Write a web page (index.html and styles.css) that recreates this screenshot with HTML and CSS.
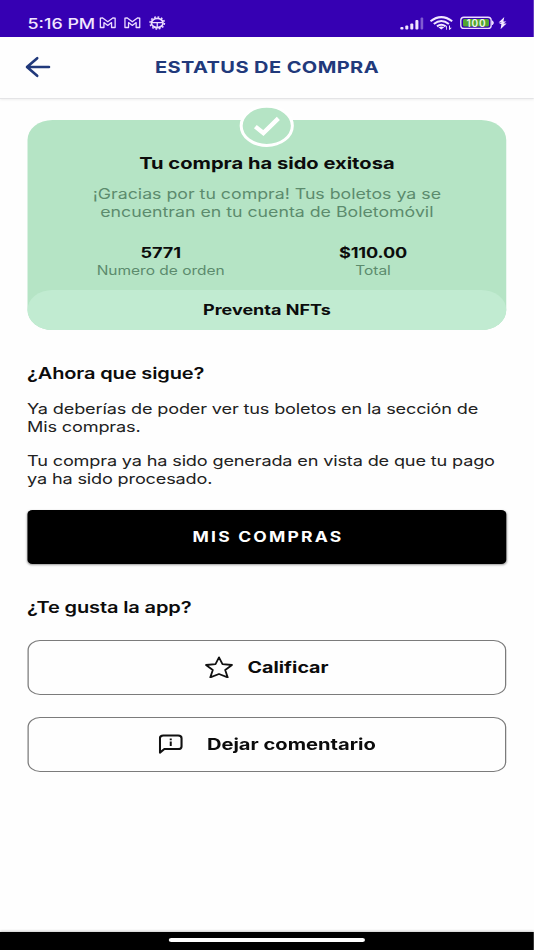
FILE: index.html
```html
<!DOCTYPE html>
<html lang="es">
<head>
    <meta charset="UTF-8">
    <meta name="viewport" content="width=device-width, initial-scale=1.0">
    <title>Estatus de compra</title>
    <link rel="stylesheet" href="styles.css">
</head>
<body>
<div class="screen">
    <!-- Phone status bar -->
    <div class="status-bar">
        <span class="time">5:16 PM</span>
        <svg class="notifications" viewBox="0 0 68 16" preserveAspectRatio="none">
            <g fill="none" stroke="#ecdcff" stroke-width="1.3" stroke-linejoin="round">
                <path d="M1.6 12.5V3.2L3.6 2.8L9 6.8L14.4 2.8L16.4 3.2V12.5H12.8V7.6L9 10.4L5.2 7.6V12.5Z"/>
                <path d="M26.2 12.5V3.2L28.2 2.8L33.6 6.8L39 2.8L41 3.2V12.5H37.4V7.6L33.6 10.4L29.8 7.6V12.5Z"/>
                <ellipse cx="58.5" cy="8" rx="5.8" ry="4.6" stroke-width="1.7"/>
                <ellipse cx="58.5" cy="8" rx="7.2" ry="6" stroke-width="1.5" stroke-dasharray="1.7 1.75"/>
                <path d="M53 7.6H64M58.5 7.6V13"/>
            </g>
        </svg>
        <svg class="system" viewBox="0 0 108 16" preserveAspectRatio="none">
            <g fill="#f1e6ff">
                <rect x="0.3" y="12" width="3.2" height="2.5" rx="1"/>
                <rect x="5.3" y="10.5" width="3" height="4" rx="1"/>
                <rect x="10.3" y="8.5" width="3" height="6" rx="1"/>
                <rect x="15.4" y="5" width="3" height="9.5" rx="1"/>
                <rect x="20.6" y="2.5" width="2.6" height="12" rx="1" opacity=".4"/>
            </g>
            <g fill="none" stroke="#f1e6ff" stroke-width="2">
                <path d="M30.5 6.3Q41.3 -2 52.2 6.3"/>
                <path d="M33.8 9Q41.3 3 48.9 9"/>
                <path d="M37 11.4Q41.3 8 45.6 11.4"/>
            </g>
            <path fill="#f1e6ff" d="M38.4 12.3Q41.3 10.6 44.2 12.3L41.3 14.6ZM45.4 12.2L47 10.4V14.8H46.2V12.2ZM49 10.6H50V12.8H51.8L49.6 15L49 14.6Z"/>
            <rect x="60.8" y="2.2" width="30.4" height="11.2" rx="3.2" fill="none" stroke="#ecdcff" stroke-width="1.4"/>
            <rect x="63" y="4" width="26" height="7.6" rx="1.5" fill="#52a62f"/>
            <path d="M92.5 5.8Q94.3 7.8 92.5 9.8Z" fill="#ecdcff" stroke="#ecdcff"/>
            <text x="76.5" y="12" text-anchor="middle" class="battery-text">100</text>
            <path d="M104.3 2L98.6 7.4H101.8L99 8.9H101.4L100.6 14.3L106.6 8.4H103.4L106.4 6.6H103.4Z" fill="#f1e6ff"/>
        </svg>
    </div>

    <div class="header">
        <svg class="back" viewBox="0 0 26 22" preserveAspectRatio="none">
            <path d="M24 11H2.5M12.2 2.2L2 11L12.2 19.8" fill="none" stroke="#21397b" stroke-width="2.6" stroke-linecap="round" stroke-linejoin="round"/>
        </svg>
        <h1>ESTATUS DE COMPRA</h1>
    </div>

    <div class="content">
        <div class="card">
            <svg class="badge" viewBox="0 0 56 44" preserveAspectRatio="none">
                <ellipse cx="28" cy="21.8" rx="25.6" ry="19.6" fill="#b5e4c5" stroke="#fff" stroke-width="3"/>
                <path d="M16.6 22.6L24.6 29L39.6 14.4" fill="none" stroke="#fff" stroke-width="4.4"/>
            </svg>
            <h2>Tu compra ha sido exitosa</h2>
            <p class="thanks">¡Gracias por tu compra! Tus boletos ya se<br>encuentran en tu cuenta de Boletomóvil</p>
            <div class="details">
                <div class="detail">
                    <strong>5771</strong>
                    <span>Numero de orden</span>
                </div>
                <div class="detail">
                    <strong>$110.00</strong>
                    <span>Total</span>
                </div>
            </div>
            <div class="event">Preventa NFTs</div>
        </div>

        <h3>¿Ahora que sigue?</h3>
        <p class="info">Ya deberías de poder ver tus boletos en la sección de<br>Mis compras.</p>
        <p class="info">Tu compra ya ha sido generada en vista de que tu pago<br>ya ha sido procesado.</p>
        <button class="primary">MIS COMPRAS</button>

        <h3 class="rate">¿Te gusta la app?</h3>
        <button class="outline">
            <svg class="star" viewBox="0 0 28 22" preserveAspectRatio="none">
                <path d="M14 1.4L17.5 8.1L27 9L20.2 14L22.7 21.4L14 18L5.3 21.4L7.8 14L1 9L10.5 8.1Z" fill="none" stroke="#111" stroke-width="1.8" stroke-linejoin="round"/>
            </svg>
            Calificar
        </button>
        <button class="outline comment">
            <svg class="bubble" viewBox="0 0 24 20" preserveAspectRatio="none">
                <path d="M1.2 18.6V4.2Q1.2 1.5 4.6 1.5H19.4Q22.8 1.5 22.8 4.2V12.4Q22.8 15 19.4 15H5.6Z" fill="none" stroke="#111" stroke-width="2.1" stroke-linejoin="round"/>
                <path d="M11 4.6H13V6.2H11ZM11 7.4H13V12H11Z" fill="#111"/>
            </svg>
            Dejar comentario
        </button>
    </div>

    <div class="nav-bar"><div class="pill"></div></div>
</div>
</body>
</html>
```
FILE: styles.css
```css
body {
    margin: 0;
    background-color: #fefefe;
    overflow: hidden;
}

.screen {
    display: flex;
    flex-direction: column;
    width: 427.2px;
    height: 950px;
    transform: scaleX(1.25);
    transform-origin: 0 0;
    background-color: #fefefe;
    color: #0c0c0c;
    font-family: Inter, "Open Sans", sans-serif;
}

h1, h2, h3, p {
    margin: 0;
}

.status-bar {
    display: flex;
    align-items: center;
    box-sizing: border-box;
    height: 37px;
    padding: 9px 21px 0 22px;
    background-color: #3600b3;
}

.time {
    width: 57px;
    color: #f1e6ff;
    font-size: 14.3px;
    font-weight: 500;
    white-space: nowrap;
}

.notifications {
    width: 54.4px;
    height: 16px;
}

.system {
    width: 86.4px;
    height: 16px;
    margin-left: auto;
}

.battery-text {
    fill: #f1f5e6;
    font-size: 10px;
    font-weight: 600;
    letter-spacing: 0.8px;
}

.header {
    display: grid;
    grid-template-columns: 44px 1fr 44px;
    align-items: center;
    box-sizing: border-box;
    height: 62px;
    padding-bottom: 2px;
    border-bottom: 1px solid #e4e4e6;
    box-shadow: 0 1px 2px rgba(0, 0, 0, 0.06);
}

.back {
    width: 20.8px;
    height: 22px;
    margin-left: 19.8px;
    margin-top: 1px;
}

h1 {
    color: #21397b;
    font-size: 16px;
    font-weight: 700;
    line-height: 20px;
    letter-spacing: 0.33px;
    text-align: center;
}

.content {
    flex: 1;
    padding: 21px 21.8px 0 21.6px;
}

.card {
    position: relative;
    display: flex;
    flex-direction: column;
    box-sizing: border-box;
    height: 210px;
    padding-top: 32px;
    border-radius: 20px;
    background-color: #b5e4c5;
    text-align: center;
}

.badge {
    position: absolute;
    top: -16px;
    left: 50%;
    width: 44.8px;
    height: 44px;
    margin-left: -22.4px;
}

h2 {
    font-size: 16.1px;
    font-weight: 700;
    line-height: 22px;
}

.thanks {
    margin-top: 11px;
    color: #5c8b6d;
    font-size: 14.2px;
    line-height: 18px;
}

.details {
    display: grid;
    grid-template-columns: 1fr 1fr;
    margin: 23px 22px 0;
}

.detail strong,
.detail span {
    display: block;
    line-height: 18px;
}

.detail strong {
    font-size: 14.5px;
    letter-spacing: -0.1px;
}

.detail span {
    color: #5c8b6d;
    font-size: 12.4px;
}

.event {
    height: 40px;
    margin-top: auto;
    border-radius: 20px;
    background-color: #c1ebd1;
    font-size: 14.4px;
    font-weight: 700;
    line-height: 39px;
}

h3 {
    margin-top: 33px;
    font-size: 16px;
    font-weight: 600;
    line-height: 21px;
    letter-spacing: -0.1px;
}

.info {
    margin-top: 16px;
    color: #222;
    font-size: 14.5px;
    line-height: 18px;
    letter-spacing: -0.13px;
    white-space: nowrap;
}

button {
    display: flex;
    align-items: center;
    justify-content: center;
    box-sizing: border-box;
    width: 100%;
    height: 55px;
    padding: 0 0 1px;
    font-family: inherit;
    font-weight: 700;
}

.primary {
    height: 54px;
    margin-top: 22px;
    border: none;
    border-radius: 4px;
    background-color: #000;
    box-shadow: 0 1px 2px rgba(0, 0, 0, 0.4);
    color: #fff;
    font-size: 14px;
    letter-spacing: 1.75px;
    text-indent: 1.75px;
}

.rate {
    margin-bottom: 22px;
}

.outline {
    gap: 11.5px;
    border: 1px solid #7b7b7b;
    border-radius: 10px;
    background-color: #fefefe;
    color: #0c0c0c;
    font-size: 15.7px;
}

.comment {
    gap: 19px;
    margin-top: 22px;
    padding-left: 1px;
    font-size: 16.1px;
}

.star {
    width: 22.4px;
    height: 22px;
}

.bubble {
    width: 19.2px;
    height: 20px;
}

.nav-bar {
    display: flex;
    justify-content: center;
    box-sizing: border-box;
    height: 18px;
    padding-top: 6px;
    background-color: #000;
    box-shadow: 0 -1px 2px rgba(0, 0, 0, 0.2);
}

.pill {
    width: 157.6px;
    height: 4px;
    border-radius: 2px;
    background-color: #fff;
}
```
